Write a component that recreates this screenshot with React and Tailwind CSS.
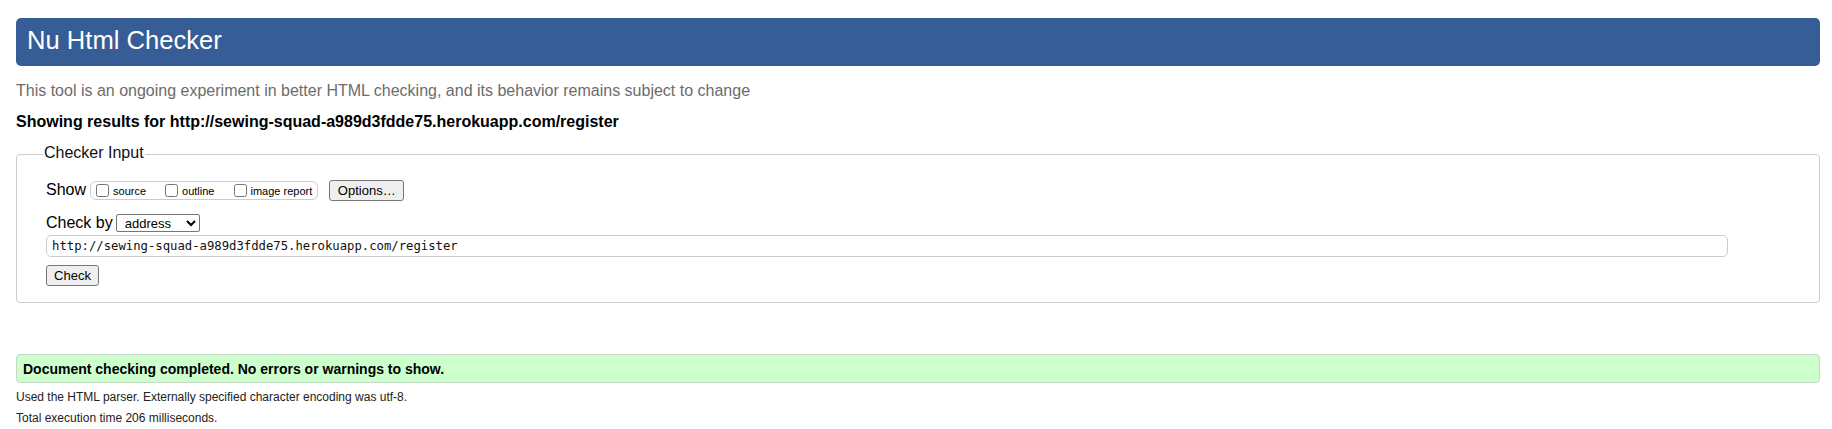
import React from "react";

export default function App() {
    return (
        <div className="min-h-screen bg-white pl-[16px] pr-[12px] pt-[18px] text-black font-['Liberation_Sans',Arial,sans-serif]">
            {/* header bar */}
            <div className="h-[48px] flex items-center pl-[11px] pb-[2px] rounded-[5px] bg-[#365d95]">
                <h1 className="text-[25.6px] leading-none font-normal text-white">Nu Html Checker</h1>
            </div>

            <p className="mt-[15px] text-[16px] leading-[20px] text-[#6c6c6c]">
                This tool is an ongoing experiment in better HTML checking, and its behavior remains subject to change
            </p>
            <p className="mt-[11px] text-[16px] leading-[20px] font-bold">
                Showing results for http://sewing-squad-a989d3fdde75.herokuapp.com/register
            </p>

            <fieldset className="mt-[11px] border border-[#cccccc] rounded-[4px] pl-[26px] pr-[91px] pt-[14px] pb-[16px]">
                <legend className="px-[1px] pb-[2px] text-[16px] leading-[20px] text-[#111]">Checker Input</legend>
                <div className="pl-[3px]">
                    <div className="h-[22px] flex items-center">
                        <span className="text-[16px] leading-[20px]">Show</span>
                        <div className="ml-[4px] h-[19px] flex items-center pl-[5px] pr-[5px] border border-[#cccccc] rounded-[6px] text-[11px] leading-[13px]">
                            <label className="flex items-center">
                                <input type="checkbox" className="w-[13px] h-[13px] m-0" />
                                <span className="ml-[4px] pt-[2px]">source</span>
                            </label>
                            <label className="flex items-center ml-[19px]">
                                <input type="checkbox" className="w-[13px] h-[13px] m-0" />
                                <span className="ml-[4px] pt-[2px]">outline</span>
                            </label>
                            <label className="flex items-center ml-[20px]">
                                <input type="checkbox" className="w-[13px] h-[13px] m-0" />
                                <span className="ml-[3px] pt-[2px]">image report</span>
                            </label>
                        </div>
                        <button type="button" className="ml-[11px] h-[21px] w-[75px] text-[13px] leading-none bg-[#efefef] border border-[#767676] rounded-[3px]">
                            Options…
                        </button>
                    </div>

                    <div className="mt-[12px] h-[20px] flex items-center">
                        <span className="text-[16px] leading-[20px]">Check by</span>
                        <select className="ml-[3px] h-[18px] w-[84px] text-[13px] bg-white border border-[#767676] rounded-[2px] pl-[4px]" defaultValue="address">
                            <option value="address">address</option>
                            <option value="file">file upload</option>
                            <option value="textarea">text input</option>
                        </select>
                    </div>

                    <input
                        type="url"
                        className="mt-[2px] block w-full h-[22px] px-[5px] border border-[#cccccc] rounded-[5px] text-[12.25px] font-['DejaVu_Sans_Mono',monospace] text-[#111]"
                        defaultValue="http://sewing-squad-a989d3fdde75.herokuapp.com/register"
                    />

                    <button type="button" className="mt-[8px] block h-[21px] w-[53px] text-[13px] leading-none bg-[#efefef] border border-[#767676] rounded-[3px]">
                        Check
                    </button>
                </div>
            </fieldset>

            <div className="mt-[51px] h-[29px] flex items-center pl-[6px] bg-[#ccffcc] border border-[#c6d9c6] rounded-[4px]">
                <p className="text-[14px] leading-none font-bold">Document checking completed. No errors or warnings to show.</p>
            </div>

            <p className="mt-[4px] text-[12px] leading-[20px] text-[#222]">
                Used the HTML parser. Externally specified character encoding was utf-8.
            </p>
            <p className="mt-[1px] text-[12px] leading-[20px] text-[#222]">Total execution time 206 milliseconds.</p>
        </div>
    );
}
